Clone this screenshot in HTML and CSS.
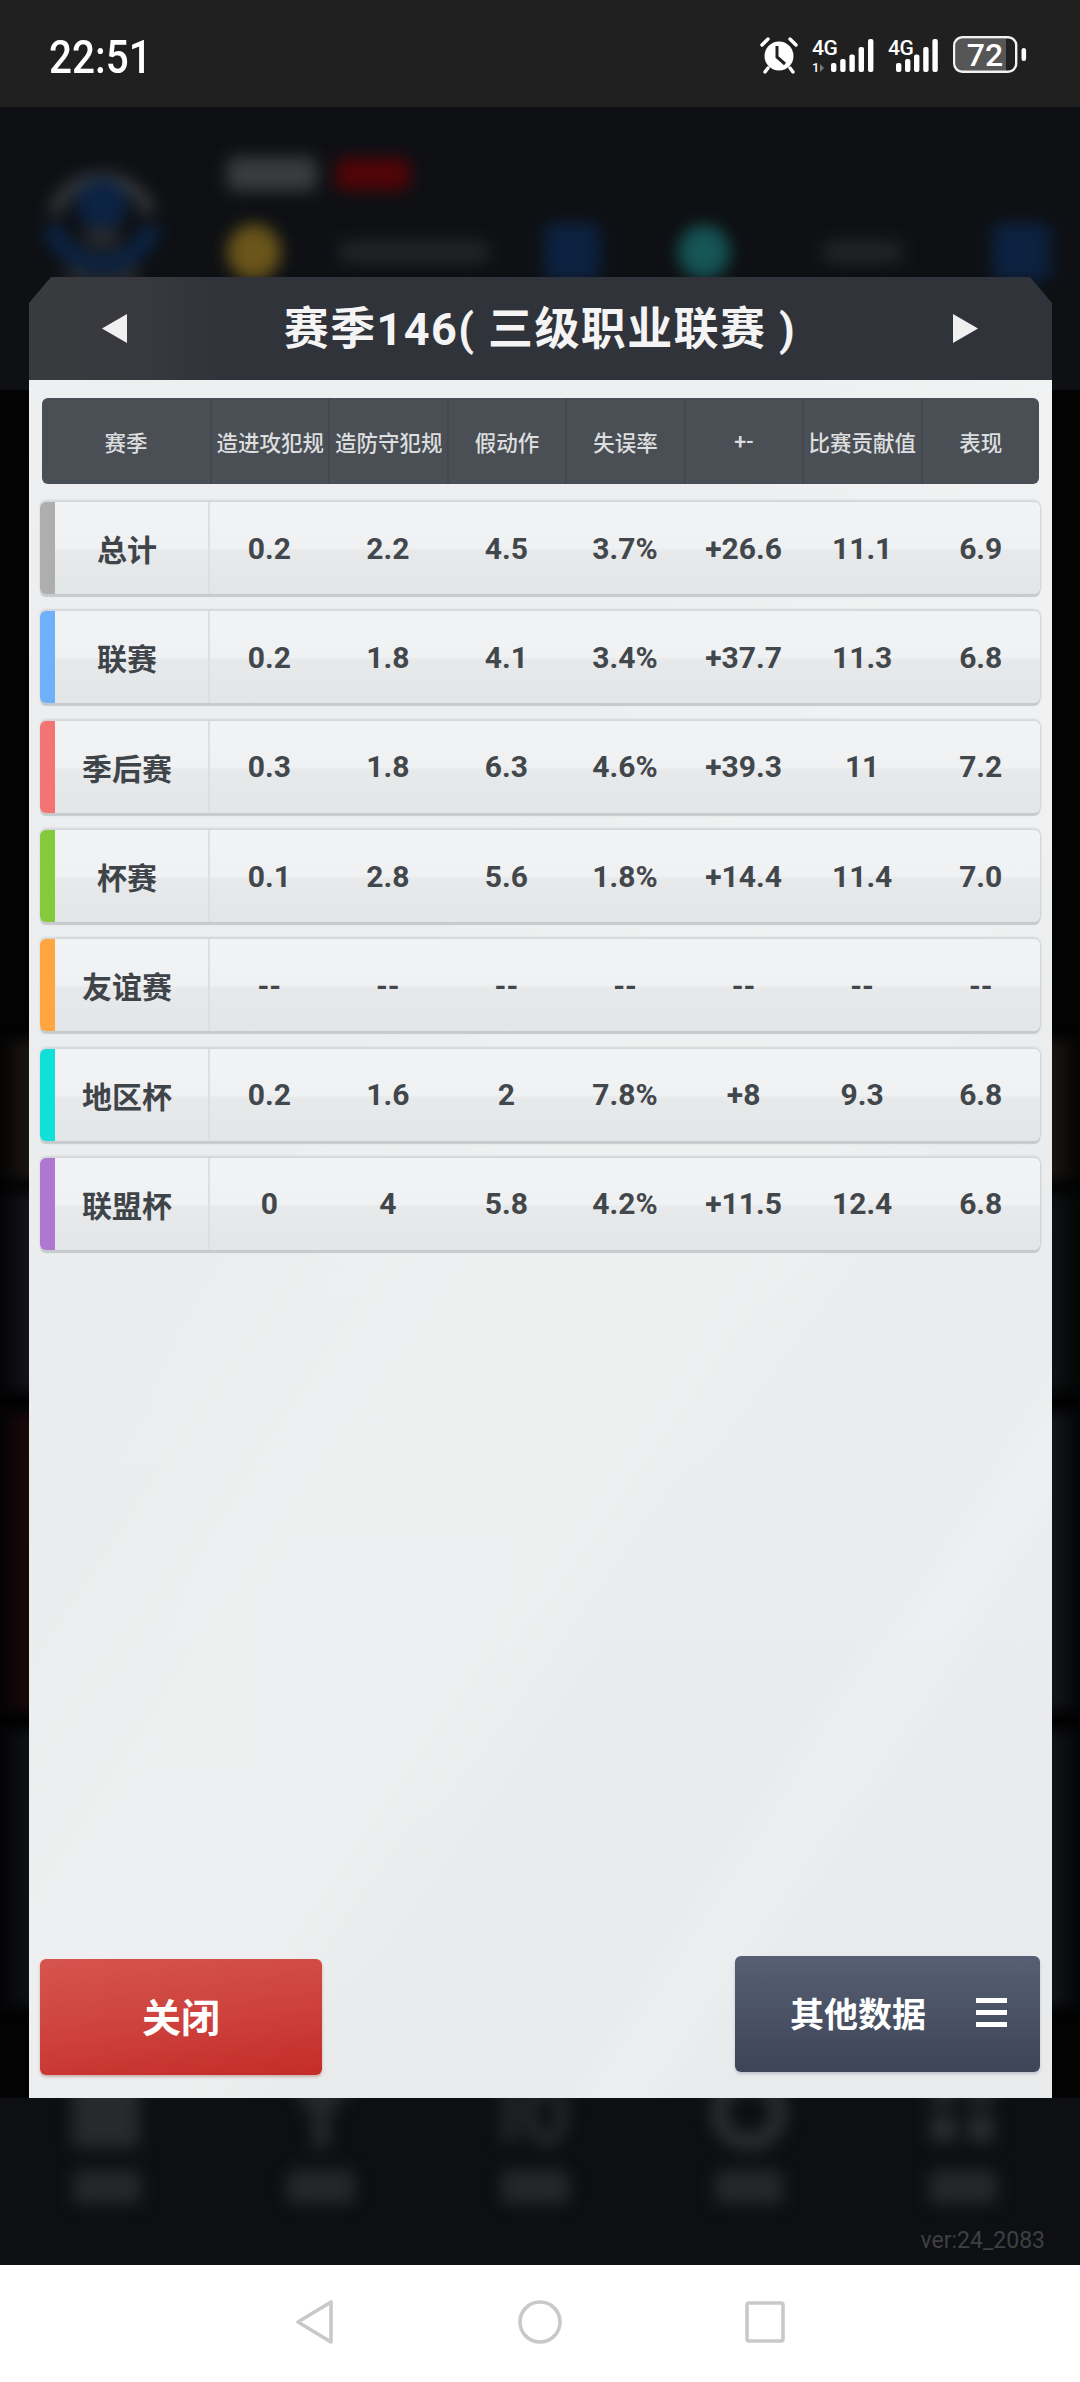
FILE: index.html
```html
<!DOCTYPE html>
<html lang="zh-CN">
<head>
<meta charset="utf-8">
<title>赛季146</title>
<link rel="stylesheet" href="styles.css">
</head>
<body>
<div class="phone">
  <header class="status">
    <span class="clock">22:51</span>
    <div class="status-icons">
      <svg class="ic-alarm" viewBox="0 0 36 36" width="36" height="36">
        <circle cx="18" cy="19" r="14.5" fill="#fff"/>
        <path d="M1 8 L7 2 M35 8 L29 2 M7 31 L4 35 M29 31 L32 35" stroke="#fff" stroke-width="3.4" fill="none" stroke-linecap="round"/>
        <path d="M16 9 V20 L24 27" stroke="#202020" stroke-width="3" fill="none"/>
      </svg>
      <svg class="ic-sig1" viewBox="0 0 62 36" width="62" height="36">
        <text x="0" y="17" class="sig-text">4G</text>
        <text x="0" y="34" class="sig-sub">1</text>
        <path d="M8 26 L12 30 L8 34Z" fill="#777"/>
        <rect x="19" y="25" width="5.4" height="9" rx="2" fill="#fff"/>
        <rect x="28.2" y="21" width="5.4" height="13" rx="2" fill="#fff"/>
        <rect x="37.4" y="16.5" width="5.4" height="17.5" rx="2" fill="#fff"/>
        <rect x="46.6" y="9" width="5.4" height="25" rx="2" fill="#fff"/>
        <rect x="56" y="1" width="5.4" height="33" rx="2" fill="#fff"/>
      </svg>
      <svg class="ic-sig2" viewBox="0 0 50 36" width="50" height="36">
        <text x="0" y="17" class="sig-text">4G</text>
        <rect x="8" y="25" width="5.4" height="9" rx="2" fill="#fff"/>
        <rect x="17" y="21" width="5.4" height="13" rx="2" fill="#fff"/>
        <rect x="26" y="16.5" width="5.4" height="17.5" rx="2" fill="#fff"/>
        <rect x="35.2" y="9" width="5.4" height="25" rx="2" fill="#fff"/>
        <rect x="44.4" y="1" width="5.4" height="33" rx="2" fill="#fff"/>
      </svg>
      <svg class="ic-batt" viewBox="0 0 74 38" width="74" height="38">
        <rect x="3" y="3" width="50" height="32" fill="#565656"/>
        <rect x="1.2" y="1.2" width="62" height="34.6" rx="8" fill="none" stroke="#f2f2f2" stroke-width="2.4"/>
        <text x="32" y="30" class="batt-text" text-anchor="middle">72</text>
        <rect x="68.5" y="12" width="4.6" height="13" rx="2.3" fill="#fff"/>
      </svg>
    </div>
  </header>

  <main class="game">
    <div class="game-head" aria-hidden="true">
      <svg class="avatar blurred" viewBox="0 0 140 150" width="140" height="150">
        <path d="M22 72 A50 50 0 0 1 118 72" fill="none" stroke="#3a3c3f" stroke-width="12"/>
        <path d="M20 84 A52 52 0 0 0 120 84" fill="none" stroke="#0c2547" stroke-width="18"/>
        <path d="M35 128 Q70 158 105 128" fill="none" stroke="#333639" stroke-width="10"/>
        <circle cx="70" cy="62" r="26" fill="#0c2344"/>
        <ellipse cx="70" cy="96" rx="20" ry="12" fill="#26292c"/>
      </svg>
      <div class="head-lines blurred">
        <div class="head-row">
          <span class="blob blob-name"></span>
          <span class="blob blob-red"></span>
        </div>
        <div class="head-row head-row-two">
          <span class="blob blob-coin"></span>
          <span class="blob blob-num"></span>
          <span class="blob blob-plus"></span>
          <span class="blob blob-gem"></span>
          <span class="blob blob-num2"></span>
          <span class="blob blob-plus2"></span>
        </div>
      </div>
    </div>

    <div class="game-cards" aria-hidden="true">
      <div class="side-card card-warm"></div>
      <div class="side-card card-violet"></div>
      <div class="side-card card-red"></div>
      <div class="side-card card-blue"></div>
    </div>

    <nav class="game-tabs">
      <div class="tab-row blurred" aria-hidden="true">
        <div class="tab"><svg viewBox="0 0 70 70" width="70" height="70"><rect x="0" y="0" width="68" height="68" rx="6" fill="#28292d"/></svg><span class="tab-label"></span></div>
        <div class="tab"><svg viewBox="0 0 70 70" width="70" height="70"><path d="M0 0 H70 L44 38 V68 H26 V38Z" fill="#25272b"/></svg><span class="tab-label"></span></div>
        <div class="tab"><svg viewBox="0 0 70 70" width="70" height="70"><rect x="0" y="0" width="20" height="62" fill="#1f2125"/><ellipse cx="46" cy="34" rx="16" ry="26" fill="none" stroke="#25272b" stroke-width="13"/></svg><span class="tab-label"></span></div>
        <div class="tab"><svg viewBox="0 0 80 70" width="80" height="70"><ellipse cx="40" cy="32" rx="30" ry="30" fill="none" stroke="#2a2c30" stroke-width="18"/></svg><span class="tab-label"></span></div>
        <div class="tab"><svg viewBox="0 0 70 70" width="70" height="70"><rect x="2" y="0" width="26" height="28" fill="#232529"/><rect x="40" y="0" width="26" height="28" fill="#232529"/><rect x="2" y="36" width="26" height="26" fill="#2a2c30"/><rect x="40" y="36" width="26" height="26" fill="#2a2c30"/></svg><span class="tab-label"></span></div>
      </div>
      <div class="version">ver:24_2083</div>
    </nav>

    <section class="modal">
      <div class="modal-head">
        <span class="arrow arrow-left"></span>
        <h1 class="modal-title">赛季146( 三级职业联赛 )</h1>
        <span class="arrow arrow-right"></span>
      </div>
      <div class="modal-body">
        <div class="table">
          <div class="thead">
            <div class="th">赛季</div>
            <div class="th">造进攻犯规</div>
            <div class="th">造防守犯规</div>
            <div class="th">假动作</div>
            <div class="th">失误率</div>
            <div class="th">+-</div>
            <div class="th">比赛贡献值</div>
            <div class="th">表现</div>
          </div>
          <div class="row c-gray">
            <div class="name">总计</div>
            <div class="val">0.2</div><div class="val">2.2</div><div class="val">4.5</div><div class="val">3.7%</div><div class="val">+26.6</div><div class="val">11.1</div><div class="val">6.9</div>
          </div>
          <div class="row c-blue">
            <div class="name">联赛</div>
            <div class="val">0.2</div><div class="val">1.8</div><div class="val">4.1</div><div class="val">3.4%</div><div class="val">+37.7</div><div class="val">11.3</div><div class="val">6.8</div>
          </div>
          <div class="row c-red">
            <div class="name">季后赛</div>
            <div class="val">0.3</div><div class="val">1.8</div><div class="val">6.3</div><div class="val">4.6%</div><div class="val">+39.3</div><div class="val">11</div><div class="val">7.2</div>
          </div>
          <div class="row c-green">
            <div class="name">杯赛</div>
            <div class="val">0.1</div><div class="val">2.8</div><div class="val">5.6</div><div class="val">1.8%</div><div class="val">+14.4</div><div class="val">11.4</div><div class="val">7.0</div>
          </div>
          <div class="row c-orange">
            <div class="name">友谊赛</div>
            <div class="val">--</div><div class="val">--</div><div class="val">--</div><div class="val">--</div><div class="val">--</div><div class="val">--</div><div class="val">--</div>
          </div>
          <div class="row c-cyan">
            <div class="name">地区杯</div>
            <div class="val">0.2</div><div class="val">1.6</div><div class="val">2</div><div class="val">7.8%</div><div class="val">+8</div><div class="val">9.3</div><div class="val">6.8</div>
          </div>
          <div class="row c-purple">
            <div class="name">联盟杯</div>
            <div class="val">0</div><div class="val">4</div><div class="val">5.8</div><div class="val">4.2%</div><div class="val">+11.5</div><div class="val">12.4</div><div class="val">6.8</div>
          </div>
        </div>
        <div class="actions">
          <button class="btn btn-close">关闭</button>
          <button class="btn btn-more">其他数据<span class="menu-icon"><i></i><i></i><i></i></span></button>
        </div>
      </div>
    </section>
  </main>

  <footer class="navbar">
    <svg viewBox="0 0 40 46" width="40" height="46"><path d="M36 3 V43 L3 23Z" fill="none" stroke="#c9c9c9" stroke-width="3.6" stroke-linejoin="round"/></svg>
    <svg viewBox="0 0 44 46" width="44" height="46"><circle cx="22" cy="23" r="20" fill="none" stroke="#c9c9c9" stroke-width="3.6"/></svg>
    <svg viewBox="0 0 40 44" width="40" height="44"><rect x="2" y="3" width="36" height="38" rx="2" fill="none" stroke="#c9c9c9" stroke-width="3.6"/></svg>
  </footer>
</div>
</body>
</html>
```
FILE: styles.css
```css
* { box-sizing: border-box; }
html, body { margin: 0; padding: 0; }
body {
  width: 1080px;
  height: 2382px;
  overflow: hidden;
  font-family: Roboto, "Noto Sans CJK SC", sans-serif;
  background: #fff;
}
.phone { display: flex; flex-direction: column; width: 1080px; height: 2382px; }

/* status bar */
.status {
  height: 107px;
  background: #202020;
  display: flex;
  align-items: flex-start;
  justify-content: space-between;
  padding: 30px 53px 0 49px;
  color: #fff;
}
.clock {
  font-size: 46px;
  line-height: 54px;
  font-weight: 500;
  transform: scaleX(0.88);
  transform-origin: left center;
}
.status-icons { display: flex; align-items: flex-start; }
.status-icons svg { overflow: visible; }
.ic-alarm { margin-top: 7px; }
.ic-sig1 { margin: 8px 0 0 15px; }
.ic-sig2 { margin: 8px 0 0 14px; }
.ic-batt { margin: 6px 0 0 15px; }
.sig-text { font: 500 21px Roboto, sans-serif; fill: #fff; letter-spacing: -0.5px; }
.sig-sub { font: 500 13px Roboto, sans-serif; fill: #fff; }
.batt-text { font: 500 32px Roboto, sans-serif; fill: #fff; }

/* blurred game behind the dialog */
.game {
  position: relative;
  flex: 1;
  display: flex;
  flex-direction: column;
  background: #0d0f12;
  overflow: hidden;
}
.blurred { filter: blur(8px); }
.game-head {
  height: 283px;
  flex: none;
  display: flex;
  padding: 35px 0 0 32px;
  background: #0e1014;
}
.avatar { flex: none; }
.head-lines { margin-left: 55px; padding-top: 15px; flex: 1; }
.head-row { display: flex; align-items: center; }
.head-row-two { margin-top: 32px; }
.blob { display: block; flex: none; border-radius: 8px; }
.blob-name { width: 90px; height: 34px; background: #3a3c3f; }
.blob-red { width: 74px; height: 32px; margin-left: 19px; background: #520406; }
.blob-coin { width: 54px; height: 56px; border-radius: 50%; background: #6a561a; }
.blob-num { width: 150px; height: 22px; margin-left: 58px; background: #222427; }
.blob-plus { width: 56px; height: 58px; margin-left: 55px; background: #0c2240; }
.blob-gem { width: 52px; height: 54px; margin-left: 78px; border-radius: 50%; background: #175556; }
.blob-num2 { width: 79px; height: 22px; margin-left: 93px; background: #222427; }
.blob-plus2 { width: 58px; height: 58px; margin-left: 90px; background: #0c2240; }

.game-cards {
  flex: 1;
  display: flex;
  flex-direction: column;
  padding-top: 650px;
  background: #030304;
}
.side-card { flex: none; filter: blur(6px); }
.card-warm { height: 140px; background: linear-gradient(90deg, #050404 0, #1a1612 29px, #1a1512 1052px, #040404 1080px); }
.card-violet { height: 198px; margin-top: 13px; background: linear-gradient(90deg, #040306 0, #16141c 29px, #0c1212 1052px, #040505 1080px); }
.card-red { height: 297px; margin-top: 22px; background: linear-gradient(90deg, #050304 0, #1a090b 29px, #14161c 1052px, #040506 1080px); }
.card-blue { height: 275px; margin-top: 21px; background: linear-gradient(90deg, #040406 0, #0f1116 29px, #12141a 1052px, #040506 1080px); }

.game-tabs { height: 167px; flex: none; background: #0d0f12; display: flex; flex-direction: column; }
.tab-row { display: grid; grid-template-columns: repeat(5, 214px); height: 114px; }
.tab { display: flex; flex-direction: column; align-items: center; margin-top: -18px; }
.tab-label { display: block; width: 68px; height: 34px; margin-top: 20px; background: #25272a; border-radius: 6px; }
.version {
  margin-top: 15px;
  padding-right: 35px;
  text-align: right;
  font-size: 23px;
  line-height: 28px;
  color: #3d3f42;
}

/* dialog */
.modal {
  position: absolute;
  left: 29px;
  top: 170px;
  width: 1023px;
  height: 1821px;
  display: flex;
  flex-direction: column;
}
.modal-head {
  height: 103px;
  flex: none;
  display: flex;
  align-items: center;
  justify-content: space-between;
  padding: 0 74px 0 73px;
  background: linear-gradient(90deg, #393a3e 0, #38393e 120px, #30333a 190px);
  clip-path: polygon(22px 0, calc(100% - 22px) 0, 100% 26px, 100% 100%, 0 100%, 0 26px);
}
.modal-title {
  margin: 0;
  padding-top: 2px;
  font-size: 45px;
  line-height: 60px;
  font-weight: 700;
  letter-spacing: 1.4px;
  color: #f4f4f4;
  white-space: pre;
}
.arrow { display: block; width: 25px; height: 29px; background: #f0f0f0; }
.arrow-left { clip-path: polygon(100% 0, 100% 100%, 0 50%); }
.arrow-right { clip-path: polygon(0 0, 100% 50%, 0 100%); }
.modal-body {
  flex: 1;
  display: flex;
  flex-direction: column;
  justify-content: space-between;
  padding: 18px 12px 23px 11px;
  background:
    linear-gradient(124deg, rgba(255,255,255,0) 77%, rgba(255,255,255,.16) 79%, rgba(255,255,255,.16) 81%, rgba(255,255,255,0) 83%),
    linear-gradient(124deg, rgba(255,255,255,0) 34%, rgba(255,255,255,.2) 48%, rgba(255,255,255,.2) 60%, rgba(255,255,255,0) 66%),
    linear-gradient(180deg, #edeff0 0, #e8eaeb 100%);
}
.table { display: flex; flex-direction: column; gap: 17.33px; }
.thead {
  height: 86px;
  margin: 0 1px 0.7px 2px;
  display: grid;
  grid-template-columns: 168px repeat(7, 1fr);
  background: #4a4e55;
  border-radius: 6px;
  overflow: hidden;
}
.th {
  display: flex;
  align-items: center;
  justify-content: center;
  font-size: 21.5px;
  font-weight: 500;
  color: #dcdedf;
  white-space: nowrap;
  border-left: 2px solid #43474e;
}
.th:first-child { border-left: 0; }
.row {
  height: 92px;
  display: grid;
  grid-template-columns: 155px repeat(7, 1fr);
  border-radius: 6px;
  border-left: 15px solid var(--bar);
  background: linear-gradient(180deg, #f1f3f4 0, #eff1f2 50%, #e7e9ea 53%, #e3e6e6 100%);
  box-shadow: 0 3px 1px #c6cacc, 0 -2px 2px #d3d6d8, 1px 0 2px #cdd0d2;
}
.c-gray { --bar: #aeaeae; }
.c-blue { --bar: #6eb1fa; }
.c-red { --bar: #f47373; }
.c-green { --bar: #85c93d; }
.c-orange { --bar: #ffa640; }
.c-cyan { --bar: #0fe0d8; }
.c-purple { --bar: #ae78d2; }
.name {
  display: flex;
  align-items: center;
  justify-content: center;
  padding-right: 9px;
  font-size: 30px;
  font-weight: 700;
  color: #3f4449;
  border-right: 2px solid #dcdfe1;
}
.val {
  display: flex;
  align-items: center;
  justify-content: center;
  font-size: 30px;
  font-weight: 700;
  color: #42474c;
}
.actions { display: flex; justify-content: space-between; align-items: flex-end; }
.btn {
  border: 0;
  padding: 0;
  color: #fff;
  font-family: Roboto, "Noto Sans CJK SC", sans-serif;
  font-weight: 700;
  display: flex;
  align-items: center;
  border-radius: 6px;
}
.btn-close {
  width: 282px;
  height: 116px;
  justify-content: center;
  padding-bottom: 4px;
  font-size: 39px;
  background: linear-gradient(172deg, #d6554e 0, #cf443f 45%, #c42c29 100%);
  box-shadow: 0 2px 3px #c9b0ae;
}
.btn-more {
  width: 305px;
  height: 116px;
  margin-bottom: 3px;
  padding: 0 0 4px 55px;
  font-size: 34px;
  background: linear-gradient(180deg, #565f73 0, #3e4458 100%);
  box-shadow: 0 2px 3px #c0c4cc;
}
.menu-icon { display: flex; flex-direction: column; gap: 7px; margin-left: 50px; }
.menu-icon i { display: block; width: 31px; height: 5px; background: #fff; }

/* system nav */
.navbar {
  height: 117px;
  flex: none;
  background: #fff;
  display: flex;
  align-items: center;
  justify-content: center;
  gap: 183px;
  padding-bottom: 3px;
}
```
